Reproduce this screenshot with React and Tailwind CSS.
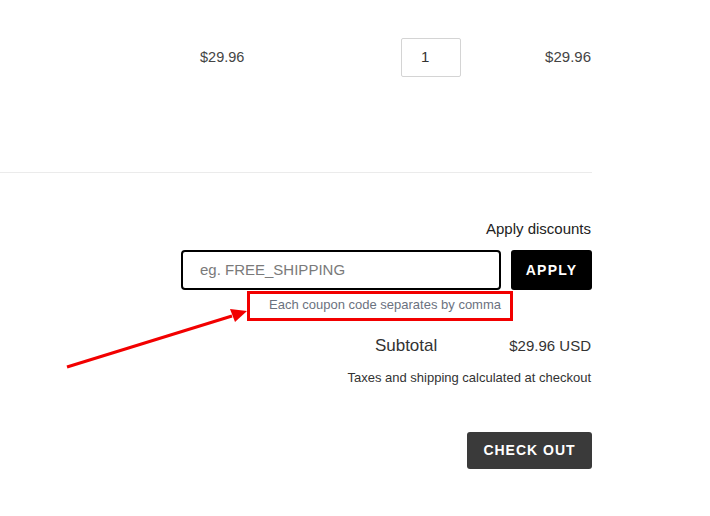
export default function App() {
  return (
    <div className="relative min-h-[516px] w-[710px] bg-white font-['Liberation_Sans',Arial,sans-serif] text-[#333]">
      <div className="w-[592px]">
        {/* Line item */}
        <div className="flex items-center border-b border-[#ebebeb] pt-[38px] pb-[95px]">
          <div className="w-[200px]" />
          <div className="w-[201px] text-[14.5px] text-[#444]">$29.96</div>
          <div className="flex h-[39px] w-[60px] items-center rounded-[2px] border border-[#d4d4d4] pl-[19px] text-[15px] text-[#333]">
            1
          </div>
          <div className="flex-1 pr-[1px] text-right text-[15px] text-[#444]">$29.96</div>
        </div>

        {/* Discounts */}
        <div className="mt-[47px] pr-[1px] text-right text-[15px] leading-[18px] text-[#222]">Apply discounts</div>
        <div className="mt-[12px] flex justify-end gap-[10px]">
          <div className="flex h-[40px] w-[320px] items-center rounded-[4px] border-2 border-black pl-[17px] text-[15px] text-[#7a7a7a]">
            eg. FREE_SHIPPING
          </div>
          <button className="h-[40px] w-[81px] rounded-[3px] bg-black text-[14px] font-bold tracking-[1.2px] text-white">
            APPLY
          </button>
        </div>
        <div className="flex justify-end pr-[91px]">
          <div className="relative mt-[4px] text-[13px] leading-[22px] text-[#6b7280]">
            Each coupon code separates by comma
            <div className="pointer-events-none absolute left-[-22px] right-[-12px] top-[-3px] bottom-[-5px] border-[3px] border-[#f20000]" />
          </div>
        </div>

        {/* Subtotal */}
        <div className="mt-[17px] flex items-center justify-end gap-[72px]">
          <span className="text-[17px] text-[#333]">Subtotal</span>
          <span className="pr-[1px] text-[15px] text-[#333]">$29.96 USD</span>
        </div>
        <div className="mt-[11px] pr-[1px] text-right text-[13px] leading-[16px] text-[#333]">
          Taxes and shipping calculated at checkout
        </div>
        <div className="mt-[46px] flex justify-end">
          <button className="h-[37px] w-[125px] rounded-[3px] bg-[#3a3a3a] text-[14px] font-bold tracking-[1px] text-white">
            CHECK OUT
          </button>
        </div>
      </div>

      {/* Annotation arrow */}
      <svg className="pointer-events-none absolute left-0 top-0" width="710" height="516">
        <line x1="67" y1="367" x2="232" y2="316" stroke="#f20000" strokeWidth="3" />
        <polygon points="247,311 230,309 235,322" fill="#f20000" />
      </svg>
    </div>
  );
}
